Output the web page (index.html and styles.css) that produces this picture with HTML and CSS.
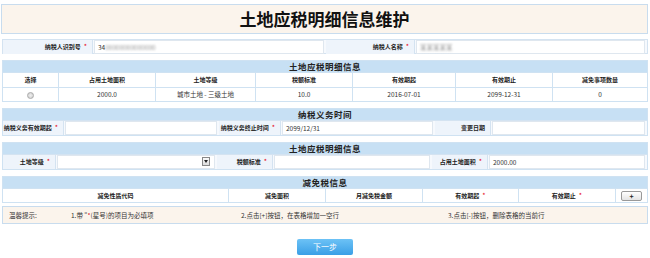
FILE: index.html
```html
<!DOCTYPE html>
<html lang="zh-CN">
<head>
    <meta charset="UTF-8">
    <title>土地应税明细信息维护</title>
    <link rel="stylesheet" href="styles.css">
</head>
<body>
    <div class="page">
        <div class="page-title">土地应税明细信息维护</div>

        <div class="form-row row-taxpayer">
            <div class="label">纳税人识别号<span class="req">*</span></div>
            <div class="field"><span class="val">34</span><span class="blur">00000000000000</span></div>
            <div class="label">纳税人名称<span class="req">*</span></div>
            <div class="field"><span class="blur">某某某某某</span></div>
        </div>

        <div class="section">
            <div class="section-head">土地应税明细信息</div>
            <div class="grid-table land-table">
                <div class="th">选择</div>
                <div class="th">占用土地面积</div>
                <div class="th">土地等级</div>
                <div class="th">税额标准</div>
                <div class="th">有效期起</div>
                <div class="th">有效期止</div>
                <div class="th">减免事项数量</div>
                <div class="td"><span class="radio"></span></div>
                <div class="td">2000.0</div>
                <div class="td">城市土地 - 三级土地</div>
                <div class="td">10.0</div>
                <div class="td">2016-07-01</div>
                <div class="td">2099-12-31</div>
                <div class="td">0</div>
            </div>
        </div>

        <div class="section">
            <div class="section-head">纳税义务时间</div>
            <div class="form-row row-period">
                <div class="label">纳税义务有效期起<span class="req">*</span></div>
                <div class="field"></div>
                <div class="label">纳税义务终止时间<span class="req">*</span></div>
                <div class="field"><span class="val">2099/12/31</span></div>
                <div class="label">变更日期</div>
                <div class="field"></div>
            </div>
        </div>

        <div class="section">
            <div class="section-head">土地应税明细信息</div>
            <div class="form-row row-detail">
                <div class="label">土地等级<span class="req">*</span></div>
                <div class="field select-field"><span class="select-btn"></span></div>
                <div class="label">税额标准<span class="req">*</span></div>
                <div class="field"></div>
                <div class="label">占用土地面积<span class="req">*</span></div>
                <div class="field"><span class="val">2000.00</span></div>
            </div>
        </div>

        <div class="section">
            <div class="section-head">减免税信息</div>
            <div class="grid-table relief-table">
                <div class="th">减免性质代码</div>
                <div class="th">减免面积</div>
                <div class="th">月减免税金额</div>
                <div class="th">有效期起<span class="req">*</span></div>
                <div class="th">有效期止<span class="req">*</span></div>
                <div class="th"><span class="add-btn">+</span></div>
            </div>
        </div>

        <div class="notice">
            <div>温馨提示:</div>
            <div>1.带 "<span class="req-inline">*</span>(星号)的项目为必填项</div>
            <div>2.点击[+]按钮，在表格增加一空行</div>
            <div>3.点击[-]按钮，删除表格的当前行</div>
        </div>

        <div class="actions">
            <a href="#" class="btn-next">下一步</a>
        </div>
    </div>
</body>
</html>
```

FILE: styles.css
```css
* {
    margin: 0;
    padding: 0;
    box-sizing: border-box;
}

body {
    background-color: #fff;
    font-family: "Noto Sans CJK SC", "DejaVu Sans", sans-serif;
    font-size: 6.5px;
    color: #333;
}

.page {
    padding: 4px 2px 0 1px;
}

.page-title {
    height: 30px;
    background-color: #fbf4ec;
    border: 1px solid #c8dcee;
    text-align: center;
    font-size: 17px;
    line-height: 27px;
    font-weight: bold;
    color: #111;
}

.form-row {
    display: grid;
    height: 15px;
    margin-left: 1px;
}

.row-taxpayer {
    margin-top: 5px;
    grid-template-columns: 90px 233px 89px 1fr;
    border: 1px solid #d4e3f1;
    background-color: #f6f9fd;
}

.row-period {
    grid-template-columns: 61px 155px 62px 154px 56px 1fr;
}

.row-detail {
    grid-template-columns: 53px 161px 56px 159px 56px 1fr;
}

.label {
    background-color: #eef4fb;
    border-right: 1px solid #d4e3f1;
    text-align: right;
    padding-right: 5px;
    font-size: 6px;
    font-weight: bold;
    line-height: 13px;
    white-space: nowrap;
    color: #222;
}

.req {
    color: #e60012;
    margin-left: 3px;
    font-weight: normal;
    font-size: 7px;
}

.req-inline {
    color: #e60012;
}

.field {
    background-color: #fff;
    border: 1px solid #dfe7ef;
    margin: 0 2px 0 1px;
    line-height: 12px;
    padding-left: 3px;
    position: relative;
}

.val {
    color: #333;
}

.blur {
    display: inline-block;
    color: #999;
    filter: blur(0.8px);
}

.select-btn {
    position: absolute;
    right: 4px;
    top: 1px;
    width: 8px;
    height: 9px;
    border: 1px solid #888;
    background: linear-gradient(#fafafa, #ddd);
}

.select-btn::after {
    content: "";
    position: absolute;
    left: 1px;
    top: 2px;
    border-left: 2px solid transparent;
    border-right: 2px solid transparent;
    border-top: 3px solid #222;
}

.section {
    margin-top: 6px;
    margin-left: 1px;
    border: 1px solid #cfe2f2;
}

.section-head {
    background-color: #c7e0f4;
    text-align: center;
    font-weight: bold;
    font-size: 8.5px;
    line-height: 11px;
    letter-spacing: 0.5px;
    color: #222;
}

.section .form-row {
    margin: 0;
    border-top: 1px solid #d4e3f1;
    background-color: #f6f9fd;
}

.grid-table {
    display: grid;
}

.land-table {
    grid-template-columns: 56px 97px 100px 97px 103px 97px 1fr;
}

.relief-table {
    grid-template-columns: 226px 97px 97px 96px 97px 1fr;
}

.th, .td {
    border-top: 1px solid #cfe2f2;
    border-right: 1px solid #cfe2f2;
    text-align: center;
    height: 14px;
    line-height: 13px;
    white-space: nowrap;
}

.th:nth-child(7), .td:last-child, .relief-table .th:last-child {
    border-right: none;
}

.th {
    font-size: 6px;
    font-weight: bold;
    background-color: #fff;
    color: #222;
}

.td {
    background-color: #fff;
}

.land-table .th {
    height: 15px;
    line-height: 14px;
}

.radio {
    display: inline-block;
    width: 7px;
    height: 7px;
    border: 1px solid #aaa;
    border-radius: 50%;
    background: radial-gradient(#eee, #ccc);
    vertical-align: middle;
}

.add-btn {
    display: inline-block;
    width: 21px;
    height: 10px;
    border: 1px solid #999;
    border-radius: 2px;
    background: linear-gradient(#fff, #e4e4e4);
    line-height: 8px;
    font-size: 7px;
    font-weight: bold;
    vertical-align: middle;
}

.notice {
    display: grid;
    grid-template-columns: 62px 170px 207px 1fr;
    margin-top: 3px;
    margin-left: 1px;
    height: 18px;
    background-color: #fbf4ec;
    border: 1px solid #c8dcee;
    line-height: 16px;
    padding-left: 6px;
    color: #333;
}

.actions {
    display: flex;
    justify-content: center;
    margin-top: 15px;
    padding-left: 1px;
}

.btn-next {
    display: block;
    width: 56px;
    height: 16px;
    border-radius: 2px;
    background: linear-gradient(#6cc2f6, #3a9fe6);
    color: #fff;
    text-decoration: none;
    text-align: center;
    font-size: 8px;
    line-height: 16px;
}
```
